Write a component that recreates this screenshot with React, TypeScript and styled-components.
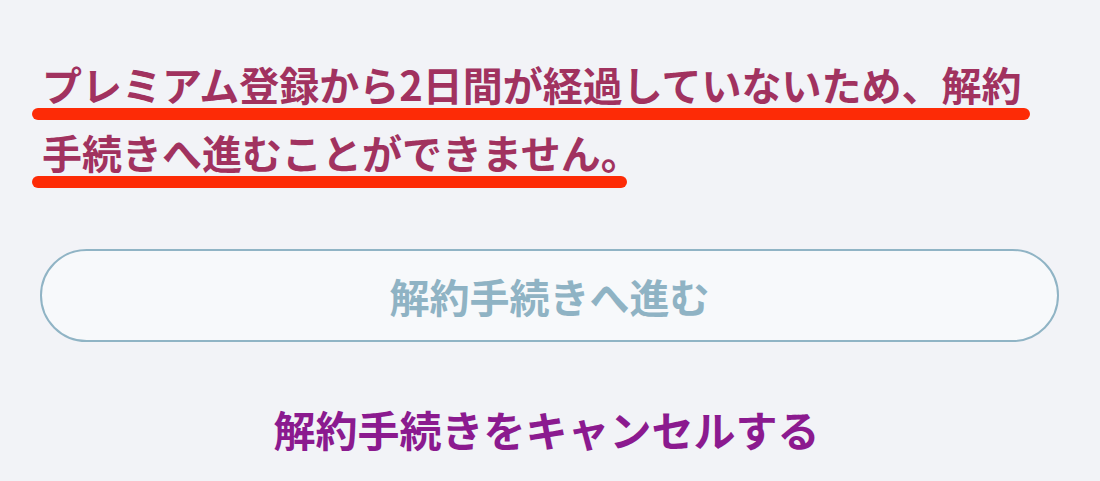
import React from 'react';
import styled, { createGlobalStyle } from 'styled-components';

const GlobalStyle = createGlobalStyle`
  html, body {
    margin: 0;
    padding: 0;
    background: #f2f3f7;
  }
  body {
    font-family: "Noto Sans CJK JP", "Noto Sans", sans-serif;
  }
`;

const Page = styled.div`
  width: 1100px;
  height: 481px;
  overflow: hidden;
  box-sizing: border-box;
  padding: 50px 41px 0 40px;
  display: flex;
  flex-direction: column;
`;

const Message = styled.p`
  margin: 0;
  padding-left: 2px;
  display: flex;
  flex-direction: column;
  align-items: flex-start;
`;

const MarkedLine = styled.span<{ $tail: number }>`
  position: relative;
  display: block;
  font-size: 40px;
  line-height: 68px;
  font-weight: 700;
  color: #a1325f;
  white-space: nowrap;

  &::after {
    content: '';
    position: absolute;
    left: -10px;
    right: ${(p) => -p.$tail}px;
    bottom: -2px;
    height: 12px;
    border-radius: 6px;
    background: #fd2b06;
  }
`;

const ProceedButton = styled.button`
  margin-top: 63px;
  height: 93px;
  width: 100%;
  box-sizing: border-box;
  border: 2px solid #90b4c5;
  border-radius: 47px;
  background: #f7f9fb;
  color: #8fb3c4;
  font-family: inherit;
  font-size: 40px;
  font-weight: 700;
  padding: 0;
  cursor: default;
`;

const CancelLink = styled.a`
  margin-top: 62px;
  display: block;
  text-align: center;
  font-size: 42px;
  line-height: 50px;
  font-weight: 700;
  color: #8b1a8f;
  text-decoration: none;
  padding-right: 6px;
`;

const App = () => {
  return (
    <>
      <GlobalStyle />
      <Page>
        <Message>
          <MarkedLine $tail={8}>プレミアム登録から2日間が経過していないため、解約</MarkedLine>
          <MarkedLine $tail={-14}>手続きへ進むことができません。</MarkedLine>
        </Message>
        <ProceedButton disabled>解約手続きへ進む</ProceedButton>
        <CancelLink>解約手続きをキャンセルする</CancelLink>
      </Page>
    </>
  );
};

export default App;
